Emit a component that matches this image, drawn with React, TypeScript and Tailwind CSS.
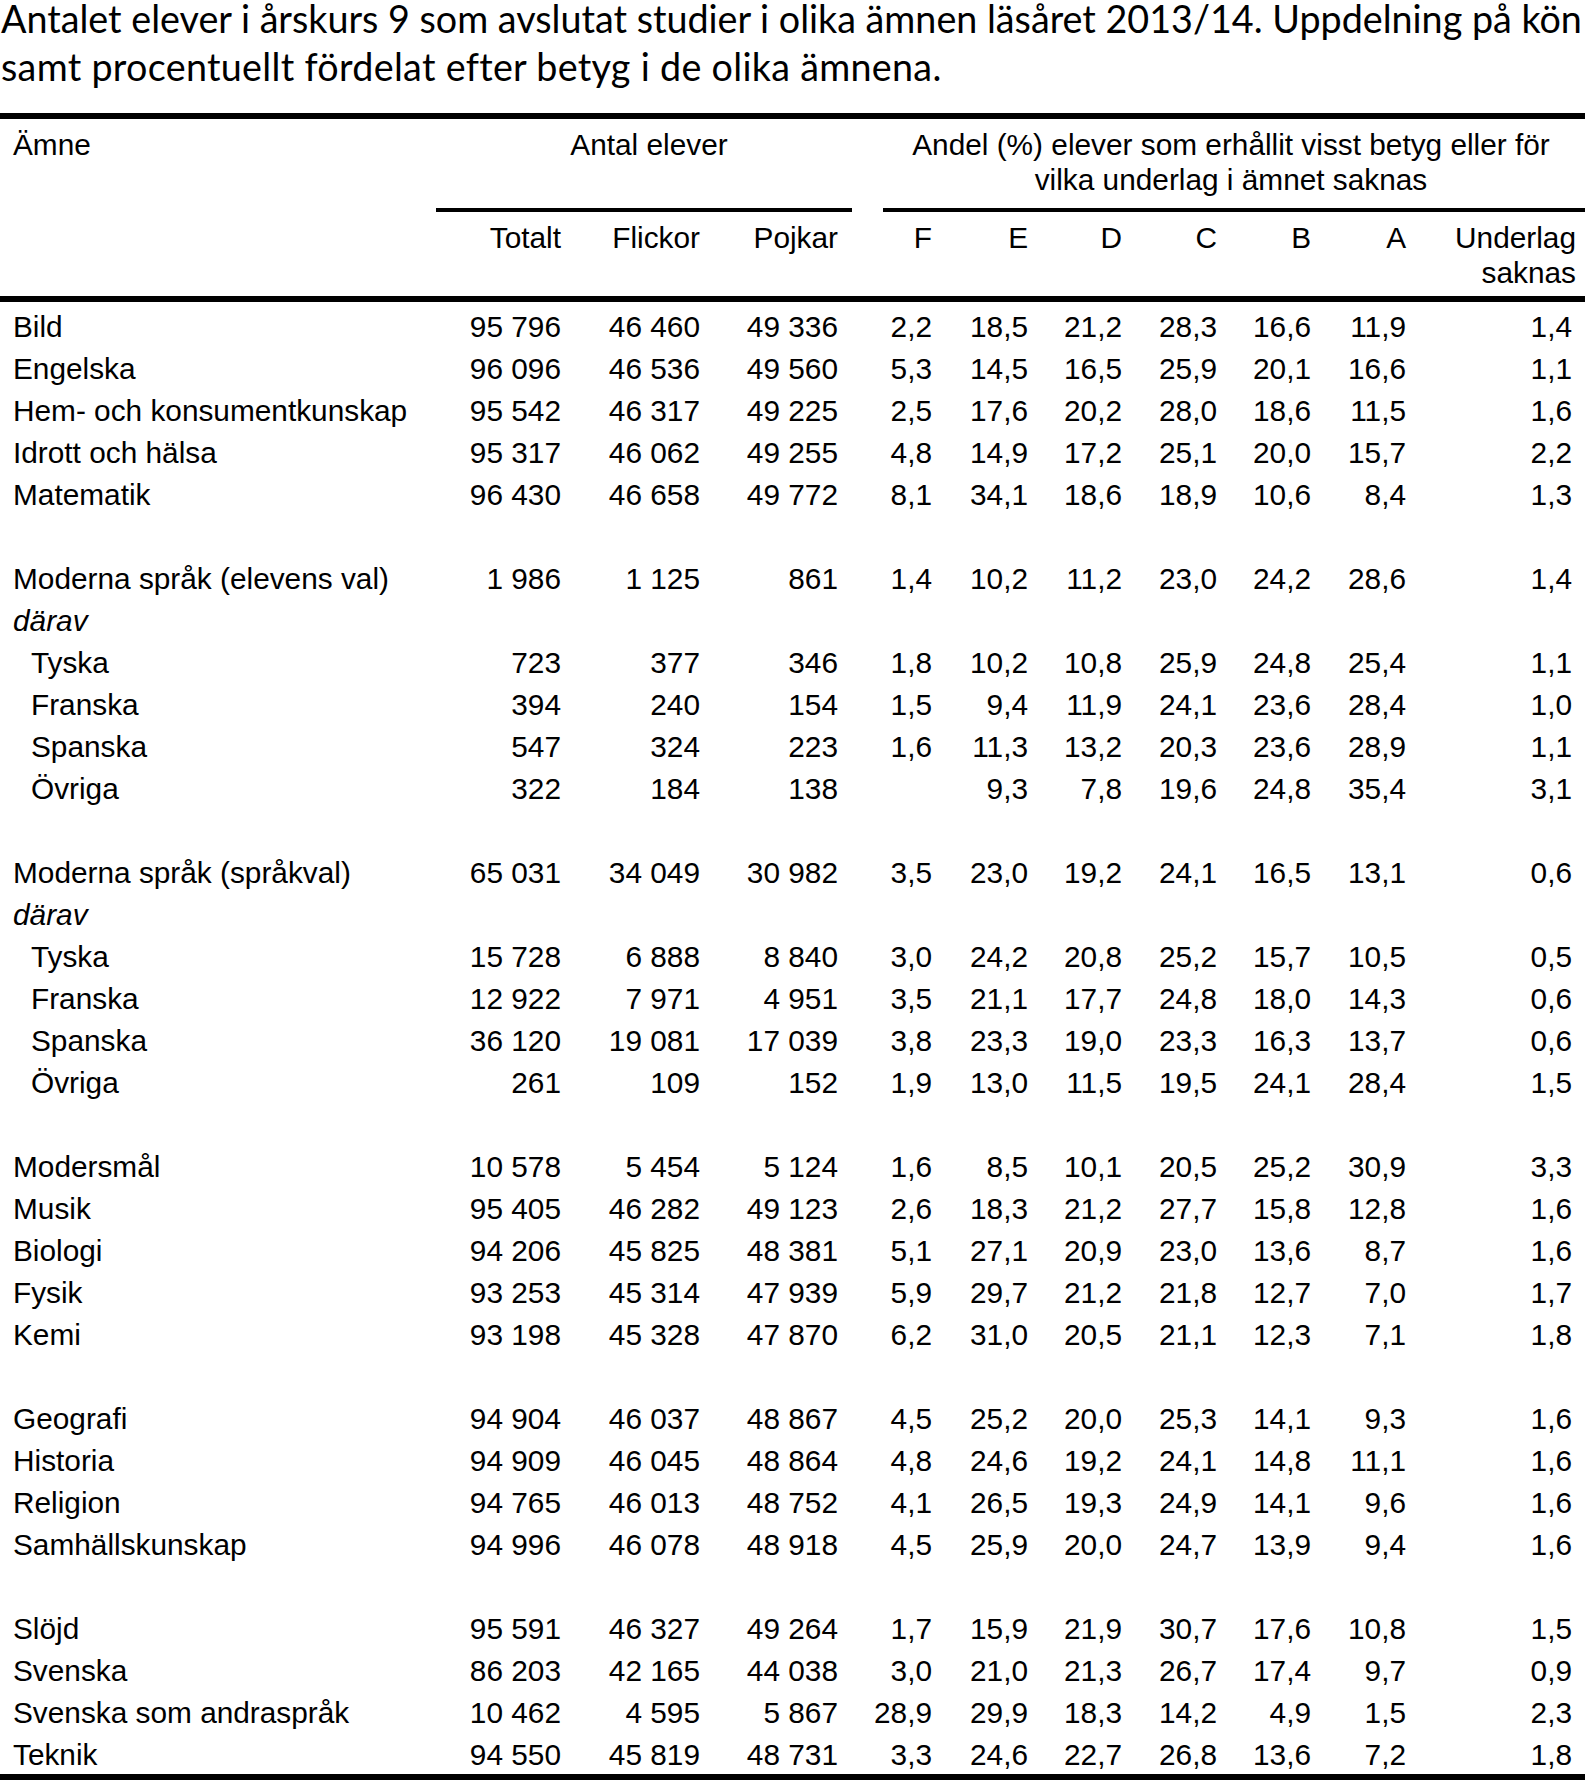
type Row = { kind: "data"; indent?: boolean; cells: string[] } | { kind: "blank" } | { kind: "note"; text: string };

const d = (cells: string[], indent = false): Row => ({ kind: "data", indent, cells });
const blank: Row = { kind: "blank" };
const darav: Row = { kind: "note", text: "därav" };

const rows: Row[] = [
  d(["Bild", "95 796", "46 460", "49 336", "2,2", "18,5", "21,2", "28,3", "16,6", "11,9", "1,4"]),
  d(["Engelska", "96 096", "46 536", "49 560", "5,3", "14,5", "16,5", "25,9", "20,1", "16,6", "1,1"]),
  d(["Hem- och konsumentkunskap", "95 542", "46 317", "49 225", "2,5", "17,6", "20,2", "28,0", "18,6", "11,5", "1,6"]),
  d(["Idrott och hälsa", "95 317", "46 062", "49 255", "4,8", "14,9", "17,2", "25,1", "20,0", "15,7", "2,2"]),
  d(["Matematik", "96 430", "46 658", "49 772", "8,1", "34,1", "18,6", "18,9", "10,6", "8,4", "1,3"]),
  blank,
  d(["Moderna språk (elevens val)", "1 986", "1 125", "861", "1,4", "10,2", "11,2", "23,0", "24,2", "28,6", "1,4"]),
  darav,
  d(["Tyska", "723", "377", "346", "1,8", "10,2", "10,8", "25,9", "24,8", "25,4", "1,1"], true),
  d(["Franska", "394", "240", "154", "1,5", "9,4", "11,9", "24,1", "23,6", "28,4", "1,0"], true),
  d(["Spanska", "547", "324", "223", "1,6", "11,3", "13,2", "20,3", "23,6", "28,9", "1,1"], true),
  d(["Övriga", "322", "184", "138", "", "9,3", "7,8", "19,6", "24,8", "35,4", "3,1"], true),
  blank,
  d(["Moderna språk (språkval)", "65 031", "34 049", "30 982", "3,5", "23,0", "19,2", "24,1", "16,5", "13,1", "0,6"]),
  darav,
  d(["Tyska", "15 728", "6 888", "8 840", "3,0", "24,2", "20,8", "25,2", "15,7", "10,5", "0,5"], true),
  d(["Franska", "12 922", "7 971", "4 951", "3,5", "21,1", "17,7", "24,8", "18,0", "14,3", "0,6"], true),
  d(["Spanska", "36 120", "19 081", "17 039", "3,8", "23,3", "19,0", "23,3", "16,3", "13,7", "0,6"], true),
  d(["Övriga", "261", "109", "152", "1,9", "13,0", "11,5", "19,5", "24,1", "28,4", "1,5"], true),
  blank,
  d(["Modersmål", "10 578", "5 454", "5 124", "1,6", "8,5", "10,1", "20,5", "25,2", "30,9", "3,3"]),
  d(["Musik", "95 405", "46 282", "49 123", "2,6", "18,3", "21,2", "27,7", "15,8", "12,8", "1,6"]),
  d(["Biologi", "94 206", "45 825", "48 381", "5,1", "27,1", "20,9", "23,0", "13,6", "8,7", "1,6"]),
  d(["Fysik", "93 253", "45 314", "47 939", "5,9", "29,7", "21,2", "21,8", "12,7", "7,0", "1,7"]),
  d(["Kemi", "93 198", "45 328", "47 870", "6,2", "31,0", "20,5", "21,1", "12,3", "7,1", "1,8"]),
  blank,
  d(["Geografi", "94 904", "46 037", "48 867", "4,5", "25,2", "20,0", "25,3", "14,1", "9,3", "1,6"]),
  d(["Historia", "94 909", "46 045", "48 864", "4,8", "24,6", "19,2", "24,1", "14,8", "11,1", "1,6"]),
  d(["Religion", "94 765", "46 013", "48 752", "4,1", "26,5", "19,3", "24,9", "14,1", "9,6", "1,6"]),
  d(["Samhällskunskap", "94 996", "46 078", "48 918", "4,5", "25,9", "20,0", "24,7", "13,9", "9,4", "1,6"]),
  blank,
  d(["Slöjd", "95 591", "46 327", "49 264", "1,7", "15,9", "21,9", "30,7", "17,6", "10,8", "1,5"]),
  d(["Svenska", "86 203", "42 165", "44 038", "3,0", "21,0", "21,3", "26,7", "17,4", "9,7", "0,9"]),
  d(["Svenska som andraspråk", "10 462", "4 595", "5 867", "28,9", "29,9", "18,3", "14,2", "4,9", "1,5", "2,3"]),
  d(["Teknik", "94 550", "45 819", "48 731", "3,3", "24,6", "22,7", "26,8", "13,6", "7,2", "1,8"]),
];

const grid = "grid grid-cols-[436px_139px_139px_138px_94px_96px_94px_95px_94px_95px_165px]";
const subHeads = ["Totalt", "Flickor", "Pojkar", "F", "E", "D", "C", "B", "A"];

export default function App() {
  return (
    <div className="w-[1585px] bg-white text-black">
      {/* Title */}
      <div className="flex h-[113px] flex-col font-[family-name:Lato,'Open_Sans',sans-serif] text-[37.7px] whitespace-nowrap">
        <div className="pl-[1px] leading-[37px]">
          Antalet elever i årskurs 9 som avslutat studier i olika ämnen läsåret 2013/14. Uppdelning på kön
        </div>
        <div className="mt-[7px] pl-[1px] leading-[46px] tracking-[0.3px]">
          samt procentuellt fördelat efter betyg i de olika ämnena.
        </div>
      </div>

      <div className="font-[family-name:'Liberation_Sans',Arial,sans-serif] text-[29.8px]">
        <div className="h-[6px] bg-black" />

        {/* Header */}
        <div className={`${grid} leading-[35px]`}>
          <div className="pl-[13px] pt-[8px]">Ämne</div>
          <div className="col-span-3 flex flex-col">
            <div className="h-[89px] pl-[10px] pt-[8px] text-center">Antal elever</div>
            <div className="h-[4px] bg-black" />
          </div>
          <div className="col-span-7 flex flex-col">
            <div className="h-[89px] pl-[25px] pt-[8px] text-center">
              Andel (%) elever som erhållit visst betyg eller för
              <br />
              vilka underlag i ämnet saknas
            </div>
            <div className="ml-[31px] h-[4px] bg-black" />
          </div>

          <div className="h-[84px]" />
          {subHeads.map((h) => (
            <div key={h} className="pr-[14px] pt-[8px] text-right">
              {h}
            </div>
          ))}
          <div className="pr-[9px] pt-[8px] text-right">
            Underlag
            <br />
            saknas
          </div>
        </div>

        <div className="h-[6px] bg-black" />

        {/* Body */}
        <div className="pt-[4px] leading-[42px]">
          {rows.map((r, i) => {
            if (r.kind === "blank") return <div key={i} className="h-[42px]" />;
            if (r.kind === "note")
              return (
                <div key={i} className="h-[42px] pl-[13px] italic">
                  {r.text}
                </div>
              );
            return (
              <div key={i} className={`${grid} h-[42px]`}>
                <div className={`${r.indent ? "pl-[31px]" : "pl-[13px]"} whitespace-nowrap`}>{r.cells[0]}</div>
                {r.cells.slice(1).map((c, j) => (
                  <div key={j} className={`text-right ${j === 9 ? "pr-[13px]" : "pr-[14px]"}`}>
                    {c}
                  </div>
                ))}
              </div>
            );
          })}
        </div>

        <div className="-mt-[2px] h-[7px] bg-black" />
      </div>
    </div>
  );
}
